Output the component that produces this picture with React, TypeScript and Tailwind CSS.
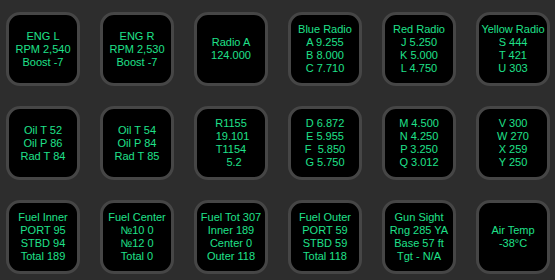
const tiles: string[][] = [
  ["ENG L", "RPM 2,540", "Boost -7"],
  ["ENG R", "RPM 2,530", "Boost -7"],
  ["Radio A", "124.000"],
  ["Blue Radio", "A 9.255", "B 8.000", "C 7.710"],
  ["Red Radio", "J 5.250", "K 5.000", "L 4.750"],
  ["Yellow Radio", "S 444", "T 421", "U 303"],
  ["Oil T 52", "Oil P 86", "Rad T 84"],
  ["Oil T 54", "Oil P 84", "Rad T 85"],
  ["R1155", " 19.101", "T1154", "  5.2"],
  ["D 6.872", "E 5.955", "F  5.850", "G 5.750"],
  ["M 4.500", "N 4.250", "P 3.250", "Q 3.012"],
  ["V 300", "W 270", "X 259", "Y 250"],
  ["Fuel Inner", "PORT 95", "STBD 94", "Total 189"],
  ["Fuel Center", "№10 0", "№12 0", "Total 0"],
  ["Fuel Tot 307", "Inner 189", "Center 0", "Outer 118"],
  ["Fuel Outer", "PORT 59", "STBD 59", "Total 118"],
  ["Gun Sight", "Rng 285 YA", "Base 57 ft", "Tgt - N/A"],
  ["Air Temp", "-38°C"],
];

export default function App() {
  return (
    <div className="w-[555px] h-[280px] bg-[#2d2d2d] pt-[12px] pl-[6px] font-['Liberation_Sans',sans-serif]">
      <div className="grid grid-cols-[repeat(6,74px)] auto-rows-[74px] gap-[20px]">
        {tiles.map((lines, i) => (
          <div
            key={i}
            className="flex flex-col items-center justify-center rounded-[14px] border-[3px] border-[#464646] bg-black text-center text-[11px] leading-[13px] text-[#1fe08a]"
          >
            {lines.map((l, j) => (
              <span key={j} className="whitespace-pre">
                {l}
              </span>
            ))}
          </div>
        ))}
      </div>
    </div>
  );
}
